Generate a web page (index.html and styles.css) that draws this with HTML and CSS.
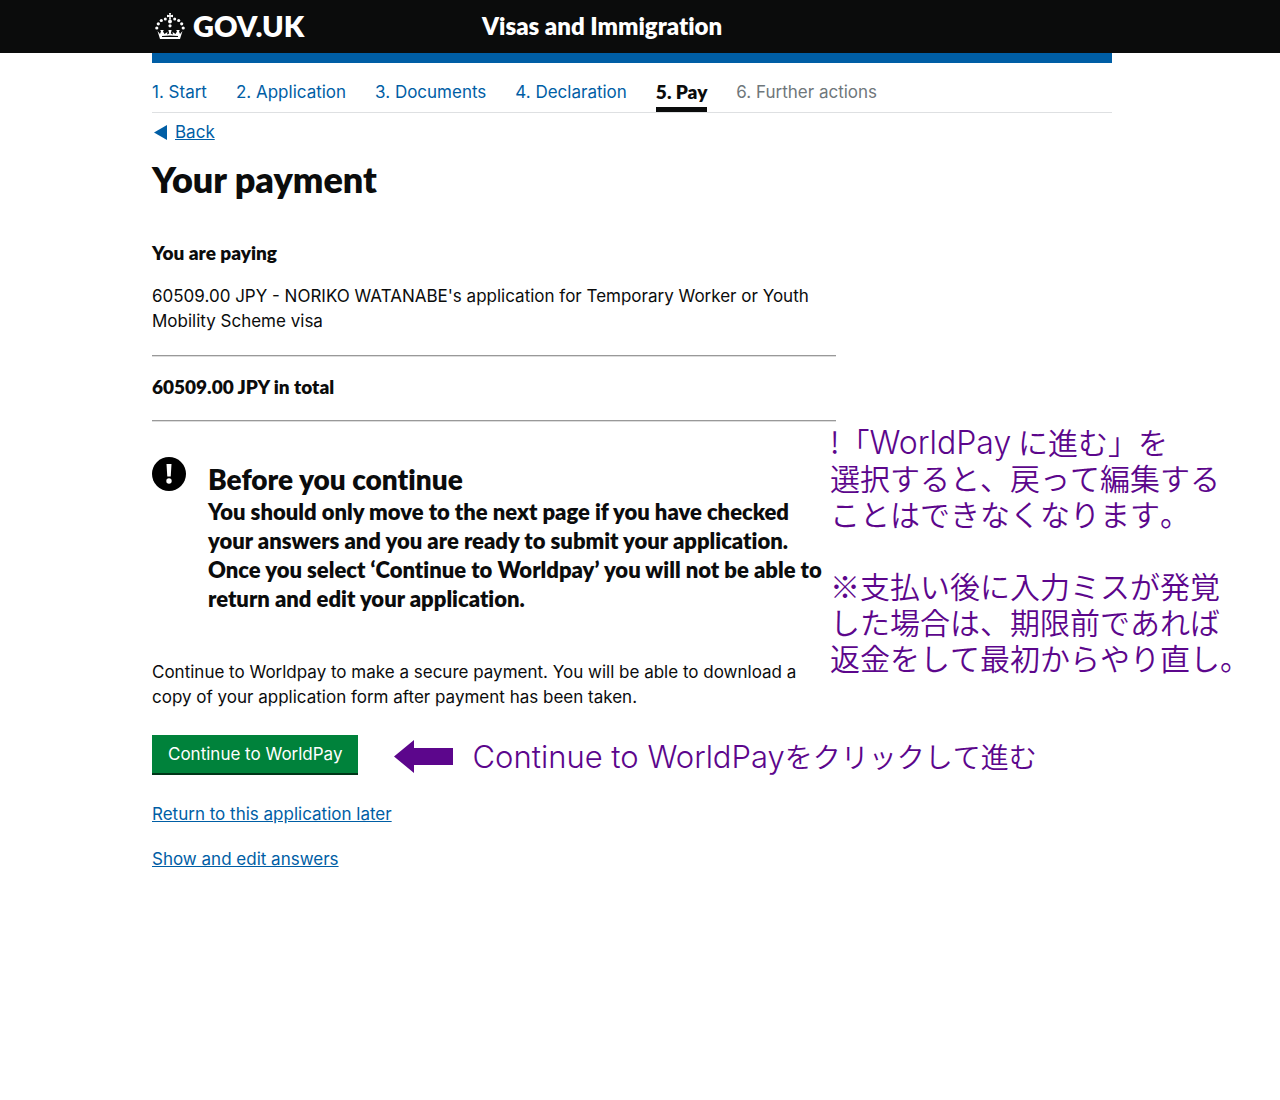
FILE: index.html
```html
<!DOCTYPE html>
<html lang="en">
<head>
<meta charset="UTF-8">
<meta name="viewport" content="width=device-width, initial-scale=1.0">
<title>Your payment - Visas and Immigration - GOV.UK</title>
<link rel="stylesheet" href="styles.css">
</head>
<body>
<header class="header">
  <div class="container header-inner">
    <a class="logo" href="#">
      <svg class="crown" viewBox="0 0 32 30" width="32" height="30" fill="#fff" aria-hidden="true">
        <path d="M15 1h2l-.4 2.200 2.400-.4v2.400l-2.400-.4.4 2.700h-2l.4-2.700-2.400.4V2.800l2.400.4z"/>
        <circle cx="16" cy="9.500" r="1.900"/>
        <circle cx="16" cy="13.800" r="1.600"/>
        <circle cx="11.300" cy="7" r="1.500"/>
        <circle cx="7.300" cy="8.500" r="1.600"/>
        <circle cx="4.300" cy="11.800" r="1.600"/>
        <circle cx="2.800" cy="16" r="1.600"/>
        <circle cx="20.700" cy="7" r="1.500"/>
        <circle cx="24.700" cy="8.500" r="1.600"/>
        <circle cx="27.700" cy="11.800" r="1.600"/>
        <circle cx="29.200" cy="16" r="1.600"/>
        <path d="M3.500 19l2.500 3 1-2.500-.8-1.500h3.600L9 19.500l1.500 2.500 3-2-.5 2.500 2.200-1-.8-3.500h3.200l-.8 3.500 2.200 1-.5-2.500 3 2 1.500-2.500-.8-1.500h3.600l-.8 1.500 1 2.500 2.500-3L26 27H6zM8 24v1h16v-1c-5-.8-11-.8-16 0z" fill-rule="evenodd"/>
      </svg>
      <span class="logo-text">GOV.UK</span>
    </a>
    <a class="service-name" href="#">Visas and Immigration</a>
  </div>
</header>

<div class="container">
  <nav class="steps">
    <a class="step" href="#">1. Start</a>
    <a class="step" href="#">2. Application</a>
    <a class="step" href="#">3. Documents</a>
    <a class="step" href="#">4. Declaration</a>
    <span class="step current">5. Pay</span>
    <span class="step disabled">6. Further actions</span>
  </nav>

  <a class="back" href="#">
    <svg class="back-arrow" viewBox="0 0 13 15" width="13" height="15" aria-hidden="true"><path d="M0 7.500L13 0v15z" fill="#005ea5"/></svg>
    <span class="back-text">Back</span>
  </a>

  <main>
    <h1>Your payment</h1>

    <section class="summary">
      <h2>You are paying</h2>
      <p>60509.00 JPY - NORIKO WATANABE's application for Temporary Worker or Youth Mobility Scheme visa</p>
      <hr>
      <p class="total">60509.00 JPY in total</p>
      <hr>
    </section>

    <div class="with-note">
      <div class="details">
        <div class="warning">
          <svg class="warning-icon" viewBox="0 0 34 34" width="34" height="34" aria-hidden="true">
            <circle cx="17" cy="17" r="17" fill="#000"/>
            <path d="M14.500 7h5l-.8 12.500h-3.400z" fill="#fff"/>
            <circle cx="17" cy="24" r="2.700" fill="#fff"/>
          </svg>
          <div class="warning-body">
            <h2 class="warning-title">Before you continue</h2>
            <p class="warning-text">You should only move to the next page if you have checked your answers and you are ready to submit your application. Once you select ‘Continue to Worldpay’ you will not be able to return and edit your application.</p>
          </div>
        </div>
        <p class="payment-info">Continue to Worldpay to make a secure payment. You will be able to download a copy of your application form after payment has been taken.</p>
      </div>

      <aside class="note" lang="ja">
        <p>!「<span class="latin">WorldPay</span> に進む」を<br>選択すると、戻って編集する<br>ことはできなくなります。</p>
        <p>※支払い後に入力ミスが発覚<br>した場合は、期限前であれば<br>返金をして最初からやり直し。</p>
      </aside>
    </div>

    <div class="actions">
      <button class="button" type="button">Continue to WorldPay</button>
      <svg class="note-arrow" viewBox="0 0 59 33" width="59" height="33" aria-hidden="true"><path d="M0 16.500L20 0v8h39v17H20v8z" fill="#5c068c"/></svg>
      <p class="hint" lang="ja"><span class="latin">Continue to WorldPay</span>をクリックして進む</p>
    </div>

    <p class="link-row"><a href="#">Return to this application later</a></p>
    <p class="link-row"><a href="#">Show and edit answers</a></p>
  </main>
</div>
</body>
</html>
```
FILE: styles.css
```css
:root {
  --black: #0b0c0c;
  --blue: #005ea5;
  --green: #00823b;
  --purple: #5c068c;
  --grey: #6f777b;
  --border: #dee0e2;
}

*,
::after,
::before {
  box-sizing: border-box;
}

body {
  margin: 0;
  background: #fff;
  color: var(--black);
  font-family: Inter, "Noto Sans CJK JP", sans-serif;
  font-size: 17px;
  line-height: 25px;
}

h1,
h2,
p {
  margin: 0;
}

a {
  color: var(--blue);
}

.container {
  max-width: 960px;
  margin: 0 auto;
}

.header,
body > .container {
  padding-right: 16px;
}

body > .container {
  max-width: 976px;
}

/* headings and bold text */
h1,
h2,
.logo-text,
.service-name,
.step.current,
.total,
.warning-text {
  font-family: Lato, sans-serif;
  font-weight: 800;
  font-variant-ligatures: none;
}

/* HEADER */
.header {
  background: var(--black);
}

.header-inner {
  display: flex;
  align-items: center;
  height: 53px;
}

.logo {
  display: flex;
  align-items: center;
  gap: 7px;
  flex: 0 0 330px;
  padding-left: 2px;
  color: #fff;
  text-decoration: none;
}

.logo-text {
  font-size: 29px;
  line-height: 32px;
}

.service-name {
  font-size: 24px;
  line-height: 32px;
  color: #fff;
  text-decoration: none;
}

.logo-text,
.service-name {
  padding-bottom: 2px;
}

/* STEPS */
.steps {
  display: flex;
  gap: 29px;
  height: 60px;
  padding-top: 17px;
  border-top: 10px solid var(--blue);
  border-bottom: 1px solid var(--border);
}

.step {
  text-decoration: none;
}

.step.current {
  font-size: 19px;
  line-height: 24px;
  border-bottom: 5px solid var(--black);
}

.step.disabled {
  color: var(--grey);
}

.back {
  display: inline-flex;
  align-items: center;
  gap: 8px;
  padding-left: 2px;
  margin-top: 7px;
  text-decoration: none;
}

.back-text {
  text-decoration: underline;
}

/* CONTENT */
h1 {
  margin-top: 12px;
  font-size: 36px;
  line-height: 40px;
}

.summary {
  max-width: 684px;
  margin-top: 41px;
}

.summary h2,
.total {
  font-size: 19px;
  line-height: 25px;
}

.summary h2 {
  margin-bottom: 19px;
}

hr {
  margin: 21px 0 17px;
  border: 0;
  border-top: 1px solid #999;
  border-bottom: 1px solid #ddd;
}

.summary hr:last-child {
  margin-bottom: 0;
}

.with-note {
  display: flex;
}

.details {
  flex: 0 0 678px;
  padding-top: 35px;
}

.warning {
  display: flex;
  gap: 22px;
}

.warning-icon {
  flex: none;
}

.warning-body {
  padding-top: 5px;
}

.warning-title {
  font-size: 28px;
  line-height: 35px;
}

.warning-text {
  font-size: 22px;
  line-height: 29px;
}

.payment-info {
  margin-top: 47px;
}

/* NOTES */
.note,
.hint {
  color: var(--purple);
  font-family: "Noto Sans CJK JP", sans-serif;
  font-weight: 350;
  line-height: 36px;
  font-kerning: none;
  white-space: nowrap;
}

.note {
  padding-top: 1px;
  font-size: 30px;
}

.note p + p {
  margin-top: 36px;
}

.latin {
  font-family: Inter, sans-serif;
  font-weight: 300;
  font-size: 32px;
  line-height: 1;
  font-kerning: normal;
}

/* ACTIONS */
.actions {
  display: flex;
  align-items: center;
  margin-top: 25px;
}

.button {
  height: 40px;
  padding: 0 16px;
  border: 0;
  border-bottom: 2px solid #003618;
  background: var(--green);
  color: #fff;
  font: inherit;
  cursor: pointer;
}

.note-arrow {
  margin: 2px 19px 0 36px;
}

.hint {
  padding-top: 2px;
  font-size: 28px;
}

.hint .latin {
  font-size: 31px;
}

.link-row {
  margin-top: 20px;
}

.actions + .link-row {
  margin-top: 27px;
}
```
